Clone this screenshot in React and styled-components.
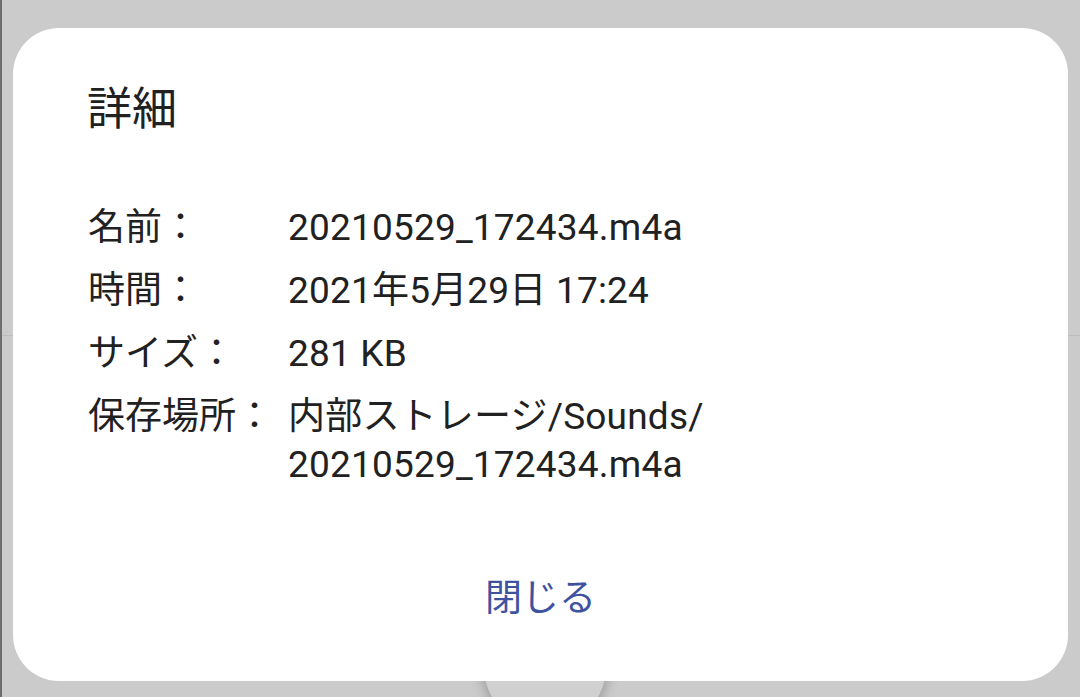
import React from "react";
import styled, { createGlobalStyle } from "styled-components";

const GlobalStyle = createGlobalStyle`
  html, body {
    margin: 0;
    padding: 0;
    background: #cbcbcb;
  }
  * {
    box-sizing: border-box;
  }
`;

const Screen = styled.div`
  position: relative;
  width: 1080px;
  height: 697px;
  overflow: hidden;
  background: #cbcbcb;
  border-left: 2px solid #6e6e6e;
  font-family: Roboto, "Noto Sans CJK JP", sans-serif;
`;

const AppBackground = styled.div`
  display: flex;
  flex-direction: column;
  height: 100%;
`;

const TopPane = styled.div`
  height: 336px;
  border-bottom: 1px solid #bdbdbd;
`;

const BottomPane = styled.div`
  flex: 1;
`;

const RecordButton = styled.div`
  position: absolute;
  left: 482px;
  top: 606px;
  width: 122px;
  height: 122px;
  border-radius: 50%;
  background: #d0d0d0;
  box-shadow: 0 2px 14px rgba(0, 0, 0, 0.3);
`;

const Overlay = styled.div`
  position: absolute;
  inset: 0;
  display: flex;
  padding: 28px 12px 16px 11px;
`;

const Dialog = styled.div`
  flex: 1;
  display: flex;
  flex-direction: column;
  background: #ffffff;
  border-radius: 46px;
  padding: 55px 75px 0 75px;
  color: #212121;
`;

const Title = styled.h2`
  margin: 0 0 0 -1px;
  font-family: "Noto Sans CJK JP", sans-serif;
  font-size: 45px;
  font-weight: 400;
  line-height: 45px;
`;

const Details = styled.dl`
  display: grid;
  grid-template-columns: 200px 1fr;
  row-gap: 15px;
  margin: 76px 0 0 0;
  font-size: 37px;
  line-height: 48px;
`;

const Label = styled.dt`
  margin: 0;
  white-space: nowrap;
`;

const Value = styled.dd`
  margin: 0;
  letter-spacing: 0.2px;
`;

const Actions = styled.div`
  display: flex;
  justify-content: center;
  margin-top: 86px;
`;

const TextButton = styled.button`
  border: none;
  background: none;
  padding: 0;
  font-family: Roboto, "Noto Sans CJK JP", sans-serif;
  font-size: 37px;
  line-height: 48px;
  color: #3e52a0;
  cursor: pointer;
`;

const details = [
  { label: "名前：", value: ["20210529_172434.m4a"] },
  { label: "時間：", value: ["2021年5月29日 17:24"] },
  { label: "サイズ：", value: ["281 KB"] },
  { label: "保存場所：", value: ["内部ストレージ/Sounds/", "20210529_172434.m4a"] },
];

export default function App() {
  return (
    <>
      <GlobalStyle />
      <Screen>
        <AppBackground>
          <TopPane />
          <BottomPane />
        </AppBackground>
        <RecordButton />
        <Overlay>
          <Dialog>
            <Title>詳細</Title>
            <Details>
              {details.map((d) => (
                <React.Fragment key={d.label}>
                  <Label>{d.label}</Label>
                  <Value>
                    {d.value.map((line, i) => (
                      <React.Fragment key={i}>
                        {i > 0 && <br />}
                        {line}
                      </React.Fragment>
                    ))}
                  </Value>
                </React.Fragment>
              ))}
            </Details>
            <Actions>
              <TextButton>閉じる</TextButton>
            </Actions>
          </Dialog>
        </Overlay>
      </Screen>
    </>
  );
}
